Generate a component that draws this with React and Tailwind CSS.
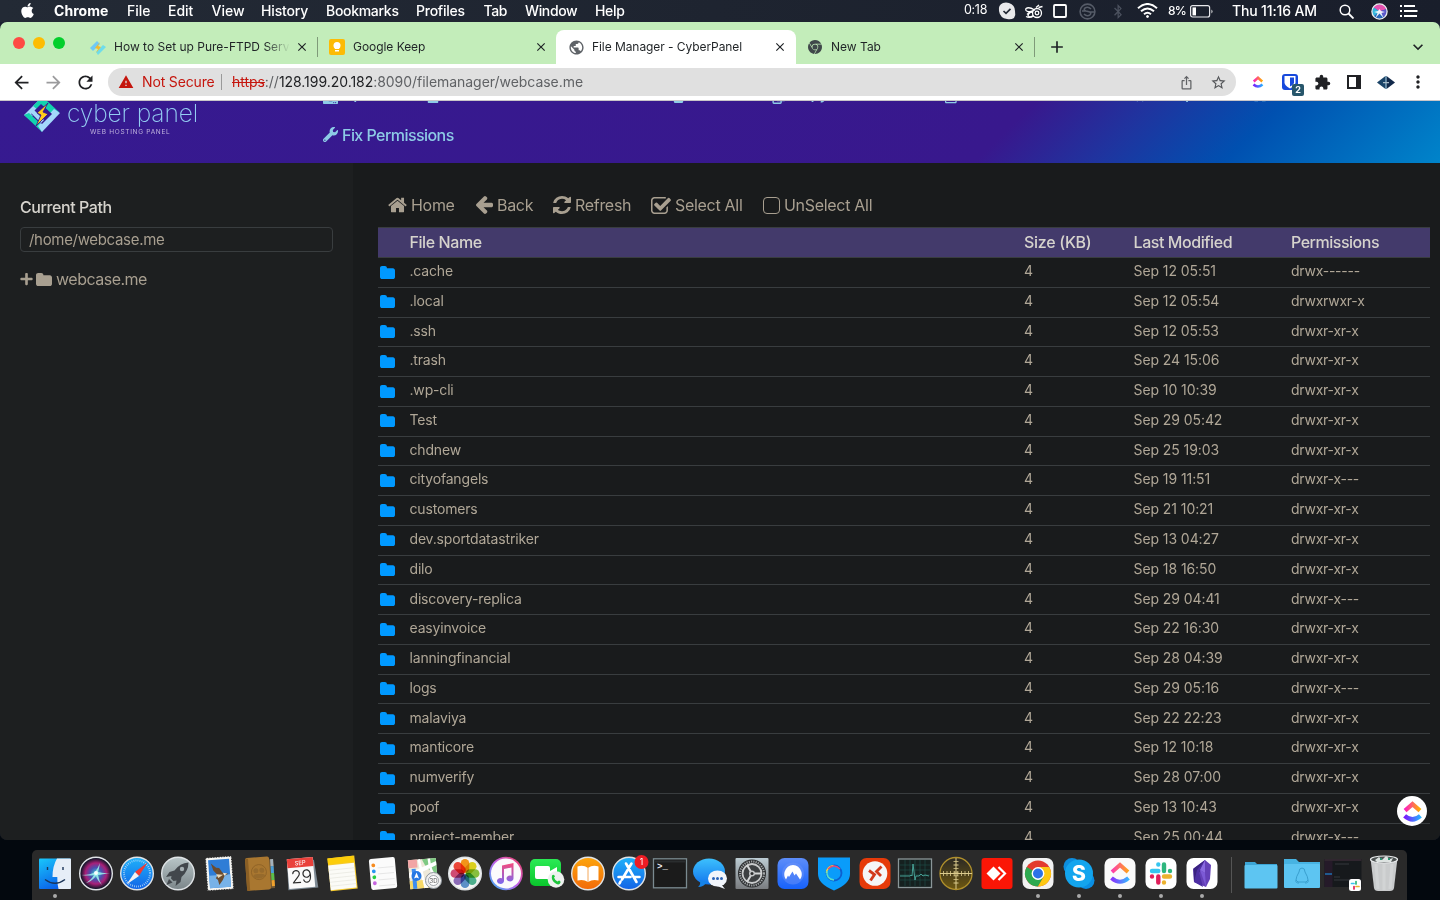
import React from "react";
import { FaApple, FaBluetoothB, FaPlus, FaWrench, FaUpload, FaFile, FaFolder, FaTrash, FaRegCopy, FaRoad, FaRegEdit, FaPencilAlt, FaCompress, FaExpand } from "react-icons/fa";
import { MdArrowBack, MdArrowForward, MdRefresh, MdWarning, MdIosShare, MdStarBorder, MdExtension, MdClose, MdAdd, MdMoreVert, MdPublic, MdExpandMore } from "react-icons/md";
import { SiGooglechrome } from "react-icons/si";

const MENUS = [
  ["Chrome", "w-[73px] font-bold tracking-[0.05px]"],
  ["File", "w-[41px] font-medium"],
  ["Edit", "w-[43.5px] font-medium"],
  ["View", "w-[49.5px] font-medium"],
  ["History", "w-[65px] font-medium tracking-[-0.15px]"],
  ["Bookmarks", "w-[90px] font-medium tracking-[-0.3px]"],
  ["Profiles", "w-[67.5px] font-medium tracking-[-0.25px]"],
  ["Tab", "w-[41.5px] font-medium tracking-[-0.4px]"],
  ["Window", "w-[70px] font-medium tracking-[-0.35px]"],
  ["Help", "w-[40px] font-medium tracking-[-0.3px]"],
];

function MenuBar() {
  return (
    <div className="flex h-[22px] shrink-0 items-center bg-linear-to-r from-[#232a35] to-[#191e2b] text-[14px] text-white">
      <div className="w-[54px] shrink-0 pb-px pl-[20px]">
        <FaApple className="h-[17px] w-[15px]" />
      </div>
      {MENUS.map(([label, cls]) => (
        <div key={label} className={`shrink-0 whitespace-nowrap pb-[2px] ${cls}`}>{label}</div>
      ))}
      <div className="ml-auto w-[34px] shrink-0 pb-[2px] text-[12.500px] tracking-tight">0:18</div>
      <svg className="h-[18px] w-[18px] shrink-0" viewBox="0 0 18 18">
        <path d="M5 1Q8 0 11 1Q17 3 17 9Q18 13 16 16Q13 18 9 17Q2 16 1 9Q0 3 5 1Z" fill="#e9e9eb" />
        <path d="M5.500 9l2.500 2.400 4.500-4.600" fill="none" stroke="#252b36" strokeWidth="1.7" />
      </svg>
      <svg className="ml-[8px] h-[18px] w-[20px] shrink-0 text-white" viewBox="0 0 20 18" fill="none" stroke="currentColor" strokeWidth="1.3">
        <path d="M10.500 8Q5 4.500 2 6.500Q1 9 4 9.500Q8 10 10.500 8ZM3 12.500q2-2.500 5-2.500M2 14.500q4 2 7-1M12 5.500l3-2.500M14.500 5.500l4-1" />
        <circle cx="13" cy="11" r="4.500" /><circle cx="13" cy="11" r="1.800" /><path d="M8.500 9Q4 11.500 4 14q3 2 6 0" />
      </svg>
      <svg className="ml-[8px] h-[16px] w-[16px] shrink-0" viewBox="0 0 16 16" fill="none" stroke="#fff">
        <rect x="2" y="2" width="12" height="12" rx="1" strokeWidth="1.800" />
      </svg>
      <svg className="ml-[11px] h-[17px] w-[17px] shrink-0" viewBox="0 0 17 17" fill="none" stroke="#565c68" strokeWidth="1.600">
        <circle cx="8.500" cy="8.500" r="7.400" /><path d="M12 6Q9 3 6 5Q4 7 7 8l3 .800q3 1 1 3Q8 14 5 11M3 8h4M10 9h5" />
      </svg>
      <FaBluetoothB className="ml-[15px] h-[15px] w-[14px] shrink-0 text-[#4b515e]" />
      <svg className="ml-[12px] h-[16px] w-[21px] shrink-0" viewBox="0 0 21 16" fill="none" stroke="#fff" strokeWidth="2">
        <path d="M1 5.200Q10.500-3.200 20 5.200M4 8.300Q10.500 2.600 17 8.300M7 11.200Q10.500 8.200 14 11.200" /><circle cx="10.500" cy="13.500" r="1" fill="#fff" strokeWidth="1" />
      </svg>
      <div className="ml-[10px] w-[22px] shrink-0 pb-px text-[12px] font-medium tracking-[-0.7px]">8%</div>
      <svg className="h-[13px] w-[24px] shrink-0" viewBox="0 0 24 13" fill="none">
        <rect x=".6" y=".6" width="19" height="11.400" rx="2" stroke="#e8e8ec" strokeWidth="1.200" /><rect x="2.500" y="2.400" width="3.500" height="8" fill="#fff" /><path d="M21.500 4.500v4q2-2 0-4" fill="#fff" />
      </svg>
      <div className="ml-[18px] w-[107px] shrink-0 whitespace-nowrap pb-[2px] font-medium tracking-[-0.15px]">Thu 11:16 AM</div>
      <svg className="h-[15px] w-[15px] shrink-0" viewBox="0 0 15 15" fill="none" stroke="#fff" strokeWidth="1.500"><circle cx="6" cy="6" r="4.800" /><path d="M9.500 9.500l5 5" strokeWidth="1.800" /></svg>
      <svg className="ml-[17px] h-[17px] w-[17px] shrink-0" viewBox="0 0 17 17">
        <circle cx="8.500" cy="8.500" r="7.600" fill="#2766b8" />
        <path d="M8.500 8.500L2 4Q5 .9 9 1.200 14 2 15.500 6z" fill="#e452b0" /><path d="M8.500 8.500L15.800 6q.8 5-3 8.300z" fill="#5b58c9" /><path d="M8.500 8.500L2 4Q.2 9 3 13z" fill="#35b7dc" />
        <path d="M8.500 6l1.500 2 4 1-3.500 1 2 5-4-4.500-4 4.500 2-5L3 9l4-1z" fill="#fff" opacity=".9" />
        <circle cx="8.500" cy="8.500" r="7.600" fill="none" stroke="#eee" strokeWidth="1.300" />
      </svg>
      <svg className="ml-[11px] mr-[22px] h-[14px] w-[19px] shrink-0" viewBox="0 0 19 14" stroke="#fff" strokeWidth="2"><path d="M1 2h2M5 2h11M1 7h2M5 7h13.500M1 12h2M5 12h13" /></svg>
    </div>
  );
}

function CyberMark({ className }) {
  return (
    <svg className={className} viewBox="0 0 36 34">
      <path d="M17 0L0 17l5 4L22 5z" fill="#a3d8fb" />
      <path d="M9 8l8-8 6 4-9 8z" fill="#12d3ae" />
      <path d="M22 2l-5 4 12 12 6-4z" fill="#12d3ae" />
      <path d="M0 17l5-2 14 13-1 6z" fill="#12d3ae" />
      <path d="M18 34L36 15l-6-4-16 17z" fill="#a3d8fb" />
      <path d="M17 6l11 10-10 10L7 16z" fill="#37198e" />
      <path d="M5 13l3-3 12 12-3 3z" fill="#a3d8fb" />
      <path d="M24 5L13 15l4 2-5 11 12-12-5-2z" fill="#ffcd1c" stroke="#37198e" strokeWidth=".9" />
    </svg>
  );
}

function Tabs() {
  return (
    <div className="flex h-[42px] shrink-0 items-stretch rounded-t-[7px] bg-[#c3edba] text-[12px] text-[#1f2326]">
      <div className="flex w-[80px] items-start gap-[8px] pl-[13px] pt-[15px]">
        <div className="h-3 w-3 rounded-full bg-[#fe4a44]" />
        <div className="h-3 w-3 rounded-full bg-[#fdbc02]" />
        <div className="h-3 w-3 rounded-full bg-[#03cf2c]" />
      </div>
      <div className="flex w-[238px] items-center pl-[10px] pt-[8px]">
        <svg className="h-[15px] w-[16px]" viewBox="0 0 16 15"><path d="M0 8l7-7 3 3-7 7z" fill="#6fcaf5" /><path d="M6 12l7-7 3 2-8 8z" fill="#6fdcea" /><path d="M10 2L5 8l3 1-2 4 5-6-3-1z" fill="#f5b92a" /></svg>
        <div className="ml-[8px] w-[176px] overflow-hidden whitespace-nowrap [mask-image:linear-gradient(to_right,black_152px,transparent_176px)]">How to Set up Pure-FTPD Server</div>
        <MdClose className="ml-[5px] h-[14px] w-[14px] shrink-0" />
        <div className="ml-auto h-[20px] w-px bg-[#7f9a79]" />
      </div>
      <div className="flex w-[238px] items-center pl-[11px] pt-[8px]">
        <div className="flex h-4 w-4 items-center justify-center rounded-[2px] bg-[#fdbb05]">
          <svg className="h-[10px] w-[8px]" viewBox="0 0 8 10" fill="#fff"><circle cx="4" cy="3.500" r="3.500" /><path d="M2 5h4v2H2zM2 8h4v1.500H2z" /></svg>
        </div>
        <div className="ml-[8px] tracking-[-0.05px]">Google Keep</div>
        <MdClose className="ml-auto mr-[8px] h-[14px] w-[14px] shrink-0" />
      </div>
      <div className="mt-[8px] flex w-[240px] items-center rounded-t-[8px] bg-white pl-[12px]">
        <MdPublic className="h-[17px] w-[17px] text-[#5f6368]" />
        <div className="ml-[7px] whitespace-nowrap tracking-[-0.07px]">File Manager - CyberPanel</div>
        <MdClose className="ml-auto mr-[9px] h-[14px] w-[14px] shrink-0" />
      </div>
      <div className="flex w-[239px] items-center pl-[12px] pt-[8px]">
        <SiGooglechrome className="h-[14px] w-[14px] text-[#40484a]" />
        <div className="ml-[9px]">New Tab</div>
        <MdClose className="ml-auto mr-[8px] h-[14px] w-[14px] shrink-0" />
        <div className="h-[20px] w-px bg-[#7f9a79]" />
      </div>
      <div className="flex flex-1 items-center justify-between pl-[12px] pr-[12px] pt-[8px]">
        <MdAdd className="h-[20px] w-[20px]" />
        <MdExpandMore className="h-[20px] w-[20px]" />
      </div>
    </div>
  );
}

function ClickUp({ className }) {
  return (
    <svg className={className} viewBox="0 0 24 24" fill="none" strokeWidth="5">
      <defs>
        <linearGradient id="cu1"><stop stopColor="#fd1fc0" /><stop offset="1" stopColor="#ffb000" /></linearGradient>
        <linearGradient id="cu2"><stop stopColor="#7a18fd" /><stop offset="1" stopColor="#28b0ff" /></linearGradient>
      </defs>
      <path d="M3.500 11L12 3.500 20.500 11" stroke="url(#cu1)" />
      <path d="M3 17Q12 25 21 17" stroke="url(#cu2)" />
    </svg>
  );
}

function Toolbar() {
  return (
    <div className="flex h-[37px] shrink-0 items-center border-b border-[#c9c6c9] bg-white text-[14px] text-[#202124]">
      <div className="flex w-[108px] shrink-0 gap-[11px] pl-[11px]">
        <MdArrowBack className="h-[21px] w-[21px]" />
        <MdArrowForward className="h-[21px] w-[21px] text-[#9b9b9d]" />
        <MdRefresh className="h-[21px] w-[21px]" />
      </div>
      <div className="flex h-[28px] w-[1128px] shrink-0 items-center rounded-full bg-[#e0e0e0] pl-[10px] pr-[9px]">
        <MdWarning className="h-[16px] w-[16px] text-[#c5160e]" />
        <div className="ml-[8px] w-[79px] whitespace-nowrap pb-[2px] tracking-[-0.15px] text-[#c5160e]">Not Secure</div>
        <div className="h-4 w-px bg-[#9a9a9a]" />
        <div className="ml-[10px] whitespace-nowrap pb-[2px] tracking-[-0.04px] text-[#606265]"><span className="text-[#c5160e] line-through">https</span>://<span className="text-[#202124]">128.199.20.182</span>:8090/filemanager/webcase.me</div>
        <MdIosShare className="ml-auto h-[15px] w-[15px] text-[#606265]" />
        <MdStarBorder className="ml-[16px] h-[17px] w-[17px] text-[#55575a]" />
      </div>
      <ClickUp className="ml-[16px] h-[12px] w-[12px]" />
      <div className="relative ml-[18px] h-[16px] w-[16px] rounded-[3px] bg-[#1749dc]">
        <svg viewBox="0 0 16 16"><path d="M2.500 2h11v6.500q0 3-5.500 6-5.500-3-5.500-6z" fill="#fff" /><path d="M8 3.500h4v5q0 2-4 4z" fill="#1749dc" /></svg>
        <div className="absolute left-[10px] top-[10px] flex h-[12px] w-[12px] items-center justify-center rounded-[2px] bg-[#27566b] text-[9px] font-bold text-white">2</div>
      </div>
      <MdExtension className="ml-[16px] h-[17px] w-[17px]" />
      <div className="ml-[16px] h-[14px] w-[14px] border-[2px] border-r-[5px] border-[#202124]" />
      <svg className="ml-[16px] h-[13px] w-[18px]" viewBox="0 0 18 13"><path d="M0 6.500L8.500 0v13z" fill="#1b4468" /><path d="M9.500 0L18 6.500 9.500 13z" fill="#12294a" /><path d="M8.500 0h1v13h-1z" fill="#3f789c" /><path d="M6 6h6v1.200H6z" fill="#a9bcc8" /></svg>
      <MdMoreVert className="ml-[13px] h-[20px] w-[20px]" />
    </div>
  );
}

const ACTIONS = [
  ["Upload", "w-[104px]", FaUpload, "mt-[2px] h-[15px] w-[15px]"],
  ["New File", "w-[115px]", FaFile, "mt-[2px] h-[14px] w-[12px]"],
  ["New Folder", "w-[130px]", FaFolder, "mb-[4px] h-[14px] w-[15px]"],
  ["Delete", "w-[100px]", FaTrash, "mt-[2px] h-[14px] w-[13px]"],
  ["Copy", "w-[84px]", FaRegCopy, "mt-[2px] h-[15px] w-[14px]"],
  ["Move", "w-[89px]", FaRoad, "mt-[2px] h-[14px] w-[15px]"],
  ["Rename", "w-[123px]", FaRegEdit, "mt-[2px] h-[15px] w-[15px]"],
  ["Edit", "w-[65px]", FaPencilAlt, "mb-[4px] h-[14px] w-[14px]"],
  ["Compress", "w-[120px]", FaCompress, "h-[14px] w-[14px]"],
  ["Extract", "w-[90px]", FaExpand, "h-[14px] w-[14px]"],
];

function Header() {
  return (
    <div className="flex h-[62px] shrink-0 overflow-hidden bg-[linear-gradient(135deg,#361a90_0%,#38188d_69%,#1f349f_77%,#0050b0_85.500%,#0084ca_100%)]">
      <div className="flex w-[323px] shrink-0 items-start pl-[24px]">
        <CyberMark className="-mt-[3px] h-[34px] w-[36px] shrink-0" />
        <div className="ml-[7px] w-[134px]">
          <div className="h-[27px] whitespace-nowrap text-[24.500px] font-extralight leading-[25px] tracking-[-0.1px] text-[#94cdf2]">cyber panel</div>
          <div className="whitespace-nowrap pl-[23px] text-[6.500px] leading-[8px] tracking-[0.7px] text-[#bfb3dd]">WEB HOSTING PANEL</div>
        </div>
      </div>
      <div className="flex flex-1 flex-col text-[16px] font-medium text-[#8dcbe6]">
        <div className="-mt-[17px] flex h-[22px] shrink-0">
          {ACTIONS.map(([label, w, Icon, size]) => (
            <div key={label} className={`flex shrink-0 items-center gap-[4px] whitespace-nowrap leading-[20px] tracking-[-0.5px] ${w}`}>
              <Icon className={size} />
              <div className="-mt-[4px]">{label}</div>
            </div>
          ))}
        </div>
        <div className="mt-[17.500px] flex items-center leading-[22px]">
          <FaWrench className="h-[15px] w-[15px]" />
          <div className="ml-[4px] whitespace-nowrap tracking-[-0.55px]">Fix Permissions</div>
        </div>
      </div>
    </div>
  );
}

function FolderIcon({ className }) {
  return (
    <svg className={className} viewBox="0 128 1664 1408" preserveAspectRatio="none" fill="currentColor">
      <path d="M1664 608v704q0 92-66 158t-158 66H224q-92 0-158-66T0 1312V352q0-92 66-158t158-66h320q92 0 158 66t66 158v32h672q92 0 158 66t66 158z" />
    </svg>
  );
}

function Sidebar() {
  return (
    <div className="w-[353px] shrink-0 bg-[#1d1f20] pl-[20px] pr-[20px] pt-[33px] text-[#a89f90]">
      <div className="text-[16px] font-medium leading-[22px] tracking-[-0.42px] text-[#d6d3cd]">Current Path</div>
      <div className="mt-[9px] flex h-[25px] items-center rounded-[4px] border border-[#393d3f] pl-[8px] pt-px text-[15px] tracking-[-0.32px]">/home/webcase.me</div>
      <div className="mt-[16px] flex items-center text-[16px] leading-[22px]">
        <FaPlus className="h-[14px] w-[13px]" />
        <FolderIcon className="ml-[3px] h-[13px] w-[16px]" />
        <div className="ml-[4px] tracking-[-0.5px]">webcase.me</div>
      </div>
    </div>
  );
}

const ROWS = [
  [".cache", "Sep 12 05:51", "drwx------"],
  [".local", "Sep 12 05:54", "drwxrwxr-x"],
  [".ssh", "Sep 12 05:53", "drwxr-xr-x"],
  [".trash", "Sep 24 15:06", "drwxr-xr-x"],
  [".wp-cli", "Sep 10 10:39", "drwxr-xr-x"],
  ["Test", "Sep 29 05:42", "drwxr-xr-x"],
  ["chdnew", "Sep 25 19:03", "drwxr-xr-x"],
  ["cityofangels", "Sep 19 11:51", "drwxr-x---"],
  ["customers", "Sep 21 10:21", "drwxr-xr-x"],
  ["dev.sportdatastriker", "Sep 13 04:27", "drwxr-xr-x"],
  ["dilo", "Sep 18 16:50", "drwxr-xr-x"],
  ["discovery-replica", "Sep 29 04:41", "drwxr-x---"],
  ["easyinvoice", "Sep 22 16:30", "drwxr-xr-x"],
  ["lanningfinancial", "Sep 28 04:39", "drwxr-xr-x"],
  ["logs", "Sep 29 05:16", "drwxr-x---"],
  ["malaviya", "Sep 22 22:23", "drwxr-xr-x"],
  ["manticore", "Sep 12 10:18", "drwxr-xr-x"],
  ["numverify", "Sep 28 07:00", "drwxr-xr-x"],
  ["poof", "Sep 13 10:43", "drwxr-xr-x"],
  ["project-member", "Sep 25 00:44", "drwxr-x---"],
];

function Main() {
  return (
    <div className="relative flex-1 overflow-hidden bg-[#191b1c] pl-[25px] pr-[10px]">
      <div className="flex h-[64px] items-center pl-[10px] pt-[20px] text-[16px] tracking-[-0.3px] text-[#a89f90]">
        <div className="flex w-[88px] items-center">
          <svg className="h-[16px] w-[19px]" viewBox="64 192 1664 1408" fill="currentColor"><path d="M1472 992v480q0 26-19 45t-45 19h-384v-384H768v384H384q-26 0-45-19t-19-45V992q0-1 .5-3t.5-3l575-474 575 474q1 2 1 6zm223-69l-62 74q-8 9-21 11h-3q-13 0-21-7L896 424l-692 577q-12 8-24 7-13-2-21-11l-62-74q-8-10-7-23.5T101 878l719-599q32-26 76-26t76 26l244 204V288q0-14 9-23t23-9h192q14 0 23 9t9 23v408l219 182q10 8 11 21.5t-7 23.5z" /></svg>
          <div className="ml-[4px]">Home</div>
        </div>
        <div className="flex w-[77px] items-center">
          <svg className="h-[18px] w-[17px]" viewBox="64 181 1472 1558" fill="currentColor"><path d="M1536 896v128q0 53-32.5 90.5T1419 1152H715l293 294q38 36 38 90t-38 90l-75 76q-37 37-90 37-52 0-91-37l-651-652Q64 1013 64 960q0-52 37-91l651-650q38-38 91-38 52 0 90 38l75 74q38 38 38 91t-38 91L715 768h704q52 0 84.5 37.5T1536 896z" /></svg>
          <div className="ml-[4px]">Back</div>
        </div>
        <div className="flex w-[98px] items-center">
          <svg className="h-[18px] w-[18px]" viewBox="0 0 1536 1664" preserveAspectRatio="none" fill="currentColor"><path d="M1511 1056q0 5-1 7-64 268-268 434.5T764 1664q-146 0-282.5-55T238 1452l-129 129q-19 19-45 19t-45-19-19-45v-448q0-26 19-45t45-19h448q26 0 45 19t19 45-19 45l-137 137q71 66 161 102t187 36q134 0 250-65t186-179q11-17 53-117 8-23 30-23h192q13 0 22.500 9.500t9.500 22.500zm25-928v448q0 26-19 45t-45 19h-448q-26 0-45-19t-19-45 19-45l138-138Q969 256 768 256q-134 0-250 65T332 500q-11 17-53 117-8 23-30 23H50q-13 0-22.500-9.500T18 608v-7q65-268 270-434.500T768 0q146 0 284 55.500T1297 212l130-129q19-19 45-19t45 19 19 45z" /></svg>
          <div className="ml-[4px]">Refresh</div>
        </div>
        <div className="flex w-[112px] items-center">
          <svg className="h-[17px] w-[20px]" viewBox="0 0 1663 1408" fill="currentColor"><path d="M1408 802v318q0 119-84.500 203.500T1120 1408H288q-119 0-203.500-84.500T0 1120V288Q0 169 84.500 84.500T288 0h832q63 0 117 25 15 7 18 23 3 17-9 29l-49 49q-10 10-23 10-3 0-9-2-23-6-45-6H288q-66 0-113 47t-47 113v832q0 66 47 113t113 47h832q66 0 113-47t47-113V866q0-13 9-22l64-64q10-10 23-10 6 0 12 3 20 8 20 29zm231-489l-814 814q-24 24-57 24t-57-24L281 697q-24-24-24-57t24-57l110-110q24-24 57-24t57 24l263 263 647-647q24-24 57-24t57 24l110 110q24 24 24 57t-24 57z" /></svg>
          <div className="ml-[4px] whitespace-nowrap">Select All</div>
        </div>
        <div className="flex items-center">
          <div className="h-[17px] w-[17px] rounded-[4px] border-[1.500px] border-[#a89f90]" />
          <div className="ml-[4px] whitespace-nowrap">UnSelect All</div>
        </div>
      </div>
      <div className="grid h-[31px] grid-cols-[31.5px_614.5px_109.5px_157.5px_1fr] items-center border-y border-[#393d3f] bg-[#433a6b] pb-[2px] text-[16px] font-medium tracking-[-0.42px] text-[#d6d3cd]">
        <div /><div>File Name</div><div className="tracking-[-0.3px]">Size (KB)</div><div>Last Modified</div><div className="tracking-[-0.48px]">Permissions</div>
      </div>
      {ROWS.map(([name, date, perm]) => (
        <div key={name} className="grid h-[29.78px] grid-cols-[31.5px_614.5px_109.5px_157.5px_1fr] items-center border-b border-[#393d3f] pb-[3.6px] text-[14px] text-[#b0a797]">
          <FolderIcon className="ml-[2px] mt-[3px] h-[13px] w-[15px] text-[#0099ff]" />
          <div className="tracking-[-0.17px]">{name}</div><div>4</div><div className="tracking-[-0.08px]">{date}</div><div className="tracking-[-0.25px]">{perm}</div>
        </div>
      ))}
      <div className="absolute bottom-[14px] right-[13px] flex h-[30px] w-[30px] items-center justify-center rounded-full bg-white">
        <ClickUp className="h-[23px] w-[21px]" />
      </div>
    </div>
  );
}

const White = (p) => <rect x="2.500" y="2" width="31" height="31" rx="7" fill={p.fill || "#fff"} />;
const Ring = ({ fill }) => <circle cx="18" cy="17.500" r="16.300" fill={fill} stroke="#dfe3e6" strokeWidth="1.400" />;
const PETALS = [["0", "#fb9a1a"], ["45", "#e3d81f"], ["90", "#8cc63f"], ["135", "#4fb592"], ["180", "#5f95d0"], ["225", "#9170bf"], ["270", "#d84f78"], ["315", "#f4483a"]];

const DOCK = [
  { dot: true, art: <g><rect x="2" y="2.500" width="32" height="30.500" rx="1" fill="url(#gFinder)" /><path d="M20 2.500h13q1 0 1 1V32q0 1-1 1H21.500Q20 27 20.300 21H15.500Q15.500 10 20 2.500z" fill="#e6eef7" /><path d="M10.500 11v3M26 11v3" stroke="#1b3558" strokeWidth="1.400" /><path d="M8 23.500Q18 31 28 23.500" fill="none" stroke="#1b3558" strokeWidth="1.300" /></g> },
  { art: <g><Ring fill="#1c1830" /><circle cx="18" cy="17.500" r="15" fill="url(#gSiri)" /><path d="M3.500 19q9.500 0 13.500-3 3-4 5-9-1 6-2 9 5 1.500 12 1-8 1.500-12 2 1 6 4 10-5-5-6-9-5 6-10 7 6-4 8-8-5 1-12.500 0z" fill="#9ff5ec" opacity=".85" /><circle cx="18" cy="17" r="2" fill="#fff" opacity=".9" /></g> },
  { art: <g><Ring fill="url(#gBlue)" /><circle cx="18" cy="17.500" r="13" fill="none" stroke="#b9dcf8" strokeWidth="2" strokeDasharray=".7 1.350" /><path d="M28.500 6.500L20 20l-4-4z" fill="#f03a32" /><path d="M7.500 28.500L16 16l4 4z" fill="#f4f1f0" /></g> },
  { art: <g><Ring fill="url(#gGray)" /><path d="M28.500 6.500Q20 7 14.500 14.500l-5 1.500-3.500 5 5.500-1-.5 2.500 2.500 2.500 3-.5-1 5.500 5-4 1-5Q28.500 15 28.500 6.500z" fill="#42474c" /><circle cx="22" cy="13" r="2.200" fill="#a5afb2" /><path d="M9 23l-2.500 6 6-2.500z" fill="#42474c" /></g> },
  { art: <g transform="rotate(-4 18 17)"><rect x="5.500" y="1" width="26" height="33" fill="#f5f5f2" stroke="#2a2a2a" strokeWidth="1" strokeDasharray="1.300 1.300" /><rect x="8" y="3.500" width="21" height="28" fill="#2f7dd6" /><path d="M8 19h21v12.500H8z" fill="#77b2e8" /><path d="M10.500 7l5 4.500 3 .5 3 5 6 1.500-4 1.500-2 4-4 5-1-5-2-2 2-3-4-5z" fill="#6b4c2f" /><path d="M15 18l7 1-5 3z" fill="#e9d9b8" /><path d="M22 17l4 1-3 2z" fill="#f5efe0" /></g> },
  { art: <g transform="rotate(-4 18 17)"><rect x="26" y="4" width="6" height="29" fill="#6f5634" /><path d="M29 4h3v7h-3z" fill="#a5b2bc" /><path d="M29 11h3v7h-3z" fill="#4a9ed8" /><path d="M29 18h3v7h-3z" fill="#5bbf4a" /><path d="M29 25h3v6h-3z" fill="#f0a22d" /><rect x="4" y="1" width="24" height="33" rx="2" fill="#a97730" /><path d="M4 2h3v32H4z" fill="#8a5f25" /><circle cx="17" cy="16" r="7.500" fill="none" stroke="#8a5f25" strokeWidth=".8" /><circle cx="14" cy="14.500" r="2.500" fill="#966a2c" /><circle cx="20" cy="14.500" r="2.500" fill="#966a2c" /><path d="M10.500 20q2-3 6.500-2 4.500-1 6.500 2-6.500 5-13 0z" fill="#966a2c" /></g> },
  { art: <g transform="rotate(-5 18 17)"><path d="M5 5h27l2 28H4z" fill="#7d8993" /><rect x="5" y="2" width="26" height="30" fill="#fafafa" /><rect x="5" y="2" width="26" height="9" fill="#e9413b" /><text x="18" y="9" fontSize="6" textAnchor="middle" fill="#fff" fontFamily="Inter, sans-serif">SEP</text><text x="18" y="27" fontSize="18" textAnchor="middle" fill="#2b2b2b" fontWeight="300" letterSpacing="-.5" fontFamily="Inter, sans-serif">29</text></g> },
  { art: <g transform="rotate(-6 18 17)"><rect x="5" y="1" width="27" height="33" fill="#f5c92c" /><rect x="5" y="8" width="26" height="25" fill="#fbfbf7" /><path d="M5 13h26M5 17h26M5 21h26M5 25h26M5 29h26" stroke="#e4e4dc" strokeWidth=".6" /><path d="M5 1h26v6H5z" fill="#fccd0a" /></g> },
  { art: <g transform="rotate(-5 18 17)"><rect x="5" y="2" width="26" height="31" rx="2" fill="#fbfbfb" /><path d="M13 11.500h16M13 17.500h16M13 23.500h16M13 29.500h16" stroke="#dedede" strokeWidth=".7" /><circle cx="9" cy="8.500" r="1.900" fill="#f68b1f" /><circle cx="9" cy="14.500" r="1.900" fill="#2a95f0" /><circle cx="9" cy="20.500" r="1.900" fill="#28cf41" /><circle cx="9" cy="26.500" r="1.900" fill="#c664e0" /></g> },
  { art: <g><g transform="rotate(-5 18 17)"><rect x="3" y="3" width="28" height="29" fill="#eee9da" /><path d="M3 3h9v8H3z" fill="#f2a5a5" /><path d="M17 3h14v16Q21 15 17 3z" fill="#7fc983" /><path d="M3 16L31 6v4L3 21z" fill="#fff" /><path d="M14 3l4 29M24 3q0 15 7 20" stroke="#fff" strokeWidth="2.500" fill="none" /><path d="M3 24h28v8H3z" fill="#f7d968" /><path d="M16 24h5v8h-4z" fill="#fff" /><path d="M8 12v20" stroke="#3d8df0" strokeWidth="4" /></g><circle cx="10.500" cy="20" r="5" fill="#2577e3" /><path d="M10.500 16.500l2.500 6-2.500-1-2.500 1z" fill="#fff" /><circle cx="27.500" cy="24.500" r="8" fill="#eee" stroke="#8e969c" strokeWidth="1" /><circle cx="27.500" cy="24.500" r="5" fill="#fff" stroke="#7b8389" strokeWidth=".7" /><text x="27.500" y="27" fontSize="6" textAnchor="middle" fill="#555" fontFamily="Inter, sans-serif">3D</text></g> },
  { art: <g><Ring fill="#f6f6f4" />{PETALS.map(([a, c]) => <rect key={a} x="13.700" y="3" width="8.600" height="13.800" rx="4.300" fill={c} className="mix-blend-multiply" transform={`rotate(${a} 18 17.500)`} />)}</g> },
  { art: <g><circle cx="18" cy="17.500" r="16.800" fill="url(#gMusicRing)" /><circle cx="18" cy="17.500" r="15" fill="#fbfafc" /><path d="M14 9.500l11.500-2.500v15.500a3.500 3 0 1 1-2-2.800V11.500L16 13v12a3.500 3 0 1 1-2-2.800z" fill="url(#gNote)" /></g> },
  { art: <g><rect x="1" y="3" width="31" height="27" rx="5" fill="url(#gGreen)" /><rect x="6" y="10" width="15" height="13" rx="2" fill="#fff" /><path d="M21 15l7-4v11l-7-4z" fill="#fff" /><circle cx="27" cy="23.500" r="8.300" fill="#eef1ef" /><path d="M23 19.500q2-2 3 1l-1 1q1 3 3.500 4l1.500-1q2.500 1 1 3-2 2-5-.500-4-3-3-7.500z" fill="#1fc53c" /></g> },
  { art: <g><Ring fill="url(#gOrange)" /><path d="M7.500 10.500q6-2 10.500 1.500 4.500-3.500 10.500-1.500v14q-6-1.500-10.500 1.500-4.500-3-10.500-1.500z" fill="#fff" /><path d="M18 12v14" stroke="#f4a85a" strokeWidth="1" /></g> },
  { art: <g><Ring fill="url(#gBlue)" /><path d="M15 7.500l10.500 18.500M20.500 7.500L11 23.500M7.500 21h12M23 21h5.500M9.500 25.500l-1 2" stroke="#fff" strokeWidth="2.600" strokeLinecap="round" /><circle cx="30.500" cy="6" r="7" fill="#ee1c24" /><text x="30.500" y="9" fontSize="8.500" textAnchor="middle" fill="#fff" fontFamily="Inter, sans-serif">1</text></g> },
  { art: <g><rect x="1.500" y="2.800" width="33" height="29" fill="#1b1b1b" stroke="#7a8a90" strokeWidth="1.300" /><path d="M3 4.500h30v2H3z" fill="#2a2d2e" /><text x="5" y="12.500" fontSize="9" fontWeight="bold" fill="#eee" fontFamily="Liberation Mono, monospace">&gt;_</text></g> },
  { art: <g><ellipse cx="16" cy="15.500" rx="16" ry="13" fill="url(#gSky)" /><path d="M7 24q1 5-2 7 6 0 9-5z" fill="#1683e8" /><ellipse cx="24.500" cy="22.500" rx="9.500" ry="8" fill="#f2f5fb" /><path d="M28 28l4 5-8-3z" fill="#f2f5fb" /><circle cx="20.500" cy="22.500" r="1.500" fill="#2a63b8" /><circle cx="24.500" cy="22.500" r="1.500" fill="#2a63b8" /><circle cx="28.500" cy="22.500" r="1.500" fill="#2a63b8" /></g> },
  { art: <g><rect x="1.500" y="2" width="33" height="31" rx="1" fill="url(#gGear)" /><circle cx="18" cy="17.500" r="14" fill="#2f3133" /><circle cx="18" cy="17.500" r="12" fill="none" stroke="#a2a6a8" strokeWidth="2" strokeDasharray="1.200 1.100" /><circle cx="18" cy="17.500" r="9.500" fill="#3d4042" stroke="#c9cbcc" strokeWidth="1.800" /><path d="M18 17.500h10M18 17.500l-5-8.500M18 17.500l-5 8.500" stroke="#d3d5d6" strokeWidth="2" /><circle cx="18" cy="17.500" r="3" fill="#c3c5c6" /><circle cx="18" cy="17.500" r="1.500" fill="#2b2d2e" /></g> },
  { art: <g><White fill="url(#gNord)" /><circle cx="18" cy="17.500" r="11" fill="#6e95f8" opacity=".45" /><path d="M11 23.500Q8.500 20 9.500 16 12 9 18 9t8.500 7q1 4-1.500 7.500l-4-6-1.500 2-2-4-3.500 5.500-1-1.500z" fill="#fff" /></g> },
  { art: <g><path d="M2 1.500h32V18q0 10-16 16.500Q2 28 2 18z" fill="#0a9cfa" /><circle cx="18" cy="17" r="7.500" fill="none" stroke="#0c5fd0" strokeWidth="1.800" /><path d="M10.500 17a7.500 7.500 0 0 1 7-7.500" stroke="#f0d34a" strokeWidth="1.600" fill="none" /><path d="M12 13q6-6 12 0" stroke="#e34c79" strokeWidth="1.300" fill="none" /><path d="M11 15q-1 8 7 9" stroke="#5ce0c8" strokeWidth="1.500" fill="none" /></g> },
  { art: <g><White fill="#e63a09" /><circle cx="18" cy="17.500" r="12.300" fill="#f5f5f6" /><path d="M12 14.500l5.500 4-4 6M24.500 10.500l-5 5 4.500 4.500" stroke="#d2391b" strokeWidth="2.800" fill="none" /></g> },
  { art: <g><rect x="1.500" y="3" width="33" height="28.500" fill="#15201f" stroke="#8a9698" strokeWidth="1.300" /><path d="M3 9h30M3 14h30M3 19h30M3 24h30M8 4v26M13 4v26M18 4v26M23 4v26M28 4v26" stroke="#1e4a45" strokeWidth=".7" /><path d="M3 20h10l1-1 1 1 1-12 2 16 1-4 3 0 2-2 2 2 2-1 4 1" fill="none" stroke="#4cab9f" strokeWidth=".9" /></g> },
  { art: <g><circle cx="18" cy="17.500" r="16" fill="url(#gScope)" stroke="#b0902c" strokeWidth="1.300" /><path d="M18 2v31M2 17.500h32" stroke="#dccb8d" strokeWidth="1" /><path d="M18 5v25M5 17.500h26" stroke="#dccb8d" strokeWidth="5" strokeDasharray=".8 2.800" /></g> },
  { art: <g><rect x="2.500" y="2" width="31" height="31" rx="3" fill="#fb1606" /><path d="M14.500 10.500l7 7-7 7-7-7z" fill="#fff" /><path d="M19.500 11l6.500 6.500-6.500 6.500" fill="none" stroke="#fff" strokeWidth="2.200" /></g> },
  { dot: true, art: <g><White fill="#f2f2f2" /><circle cx="18" cy="17.500" r="13" fill="#e33b2e" /><path d="M6.740 11A13 13 0 0 0 18 30.500L23.600 20.800 18 17.500z" fill="#2da94f" /><path d="M29.260 11A13 13 0 0 1 18 30.500L23.600 20.800 18 11z" fill="#fdc813" /><circle cx="18" cy="17.500" r="6.400" fill="#fff" /><circle cx="18" cy="17.500" r="5" fill="#2b72e8" /></g> },
  { dot: true, art: <g><circle cx="11" cy="10.500" r="8.500" fill="#0d8ddd" /><circle cx="25" cy="24.500" r="8.500" fill="#0a8fe4" /><circle cx="18" cy="17.500" r="14" fill="#13a5ee" /><text x="18" y="25" fontSize="21" fontWeight="800" textAnchor="middle" fill="#fff" fontFamily="Inter, sans-serif">S</text></g> },
  { dot: true, art: <g><White fill="#fafafa" /><path d="M10 16l8-7 8 7" fill="none" stroke="url(#gCuA)" strokeWidth="4" /><path d="M9.500 22q8.500 7.500 17 0" fill="none" stroke="url(#gCuB)" strokeWidth="4" /></g> },
  { dot: true, art: <g><White /><g strokeWidth="4.400" strokeLinecap="round"><path d="M15.300 8.500v.1M9 15h6.300" stroke="#36c5f0" /><path d="M21 8.500V15M27 15v.1" stroke="#2eb67d" /><path d="M21 20.500h6M21 26.500v.1" stroke="#ecb22e" /><path d="M15.300 20.500v6M9 20.500v.1" stroke="#e01e5a" /></g></g> },
  { dot: true, art: <g><White /><path d="M21 4l6 5-1 14-4 8-12-5-1-13z" fill="#6541b8" /><path d="M21 4L9.500 12.500 10 26l5-9z" fill="#3a2280" /><path d="M21 4l-6 12 4 15-9-5 3-12z" fill="#4d2fa3" /><path d="M21 4l-5 10 5 3z" fill="#8a6ae0" /><path d="M16 14l5 3 1 14z" fill="#7c5ad6" /></g> },
];

const DOCK_RIGHT = [
  <g key="f"><path d="M2 6h10l2 2h20v3H2z" fill="#3ca5d6" /><rect x="1.500" y="9" width="33" height="23.500" rx="1" fill="#5dc5f2" /></g>,
  <g key="l"><path d="M0 3h12l3 3h21v5H0z" fill="#47b3e2" /><rect x="0" y="8" width="36" height="24" rx="1" fill="#5dc5f2" /><path d="M18 12q-3 0-3 4-3 5-3 8l2 2h8l2-2q0-3-3-8 0-4-3-4zM12 24q-1 3 3 3M24 24q1 3-3 3" fill="none" stroke="#399fce" strokeWidth="1" /></g>,
  <g key="w"><rect x="-.5" y="3" width="37" height="28" fill="#16191c" /><path d="M-.5 3h8v28h-8z" fill="#251a29" /><path d="M-.5 3h37v2h-37z" fill="#30262f" /><path d="M0 18h7" stroke="#1e6fb0" strokeWidth="1.500" /><path d="M9 21h6M9 24h16M10 8h14" stroke="#34383c" strokeWidth="1" /><rect x="24" y="23" width="12" height="12" rx="2.500" fill="#fff" /><g strokeWidth="1.700" strokeLinecap="round"><path d="M26.500 27.500h2.500" stroke="#36c5f0" /><path d="M31 25.500v2.500" stroke="#2eb67d" /><path d="M31 30.500h3" stroke="#ecb22e" /><path d="M29 30.500v2.500" stroke="#e01e5a" /></g></g>,
  <g key="t"><path d="M4.500 2h27l-3.500 30q-.500 3-4 3H12q-3.500 0-4-3z" fill="#c9cbcc" /><path d="M10 8l2 25M18 8v26M26 8l-2 25" stroke="#d9dbdc" strokeWidth="3" opacity=".6" /><ellipse cx="18" cy="3.500" rx="13.500" ry="3.500" fill="#4d5252" stroke="#e9ebec" strokeWidth="1.200" /><path d="M9 4l4-3 3 3 4-4 4 3 3-1-2 4H11z" fill="#dde3e1" /><path d="M14 3h2M22 3h2" stroke="#2c8f70" strokeWidth="2" /></g>,
];

function Grad({ id, a, b }) {
  return <linearGradient id={id} x1="0" y1="0" x2="0" y2="1"><stop stopColor={a} /><stop offset="1" stopColor={b} /></linearGradient>;
}

function Dock() {
  return (
    <div className="ml-[32px] mt-[10px] flex h-[50px] w-[1375px] shrink-0 rounded-t-[5px] bg-[#2a2a2a] pl-[3px] pt-[6px]">
      <svg className="absolute h-0 w-0">
        <defs>
          <linearGradient id="gFinder" x1="0" y1="0" x2=".5" y2="1"><stop stopColor="#19c7fb" /><stop offset="1" stopColor="#0a5fe8" /></linearGradient>
          <radialGradient id="gSiri"><stop stopColor="#39d0d8" /><stop offset=".4" stopColor="#4b4fb0" /><stop offset=".7" stopColor="#a81f78" /><stop offset="1" stopColor="#19162c" /></radialGradient>
          <linearGradient id="gMusicRing" x1="1" y1="0" x2="0" y2="1"><stop stopColor="#f3405c" /><stop offset=".5" stopColor="#c060e8" /><stop offset="1" stopColor="#30b8f5" /></linearGradient>
          <linearGradient id="gCuA"><stop stopColor="#fd3bb0" /><stop offset="1" stopColor="#ffa31a" /></linearGradient>
          <linearGradient id="gCuB"><stop stopColor="#8930fd" /><stop offset="1" stopColor="#38b6ff" /></linearGradient>
          <Grad id="gBlue" a="#1fb2fa" b="#1263e6" /><Grad id="gGray" a="#b9c6c8" b="#7b8589" /><Grad id="gNote" a="#f54a7c" b="#7a68f0" />
          <Grad id="gGreen" a="#2bea55" b="#0ac62c" /><Grad id="gOrange" a="#fda50c" b="#f26a0a" /><Grad id="gSky" a="#3cc0fd" b="#1377ee" />
          <Grad id="gGear" a="#bccbd2" b="#7a7d80" /><Grad id="gNord" a="#5d8df9" b="#1762fb" /><Grad id="gScope" a="#2b2924" b="#6d5711" />
        </defs>
      </svg>
      {DOCK.map((d, i) => (
        <div key={i} className="flex w-[40.96px] shrink-0 flex-col items-center">
          <svg className="h-[36px] w-[36px] overflow-visible" viewBox="0 0 36 36">{d.art}</svg>
          {d.dot && <div className="mt-[2px] h-[4px] w-[4px] rounded-full bg-[#a9a9a9]" />}
        </div>
      ))}
      <div className="flex w-[18px] shrink-0 justify-center"><div className="mt-[1px] h-[36px] w-px bg-[#555]" /></div>
      {DOCK_RIGHT.map((art, i) => (
        <div key={i} className="flex w-[40.96px] shrink-0 flex-col items-center">
          <svg className="h-[36px] w-[36px] overflow-visible" viewBox="0 0 36 36">{art}</svg>
        </div>
      ))}
    </div>
  );
}

export default function App() {
  return (
    <div className="flex h-[900px] w-[1440px] flex-col overflow-hidden bg-[#03080e] font-['Inter',sans-serif]">
      <MenuBar />
      <div className="flex h-[818px] shrink-0 flex-col overflow-hidden rounded-b-[7px] bg-[#1a2030]">
        <Tabs />
        <Toolbar />
        <Header />
        <div className="flex min-h-0 flex-1">
          <Sidebar />
          <Main />
        </div>
      </div>
      <Dock />
    </div>
  );
}
